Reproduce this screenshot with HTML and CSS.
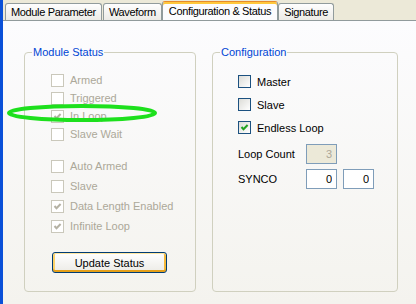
FILE: index.html
```html
<!DOCTYPE html>
<html lang="en">
<head>
  <meta charset="UTF-8">
  <title>Configuration &amp; Status</title>
  <link rel="stylesheet" href="styles.css">
</head>
<body>
  <div class="window">
    <div class="frame-edge"></div>
    <div class="dialog">
      <div class="tabs">
        <div class="tab">Module Parameter</div>
        <div class="tab">Waveform</div>
        <div class="tab active">Configuration &amp; Status</div>
        <div class="tab">Signature</div>
      </div>
      <div class="panel">
        <fieldset class="group status">
          <legend>Module Status</legend>
          <div class="group-body">
            <div class="check-list">
              <label class="check disabled"><span class="box"></span>Armed</label>
              <label class="check disabled"><span class="box"></span>Triggered</label>
              <label class="check disabled checked"><span class="box"><svg viewBox="0 0 11 11"><path d="M2.5 5 L4.5 7.2 L8.6 3"/></svg></span>In Loop</label>
              <label class="check disabled"><span class="box"></span>Slave Wait</label>
            </div>
            <div class="check-list loose">
              <label class="check disabled"><span class="box"></span>Auto Armed</label>
              <label class="check disabled"><span class="box"></span>Slave</label>
              <label class="check disabled checked"><span class="box"><svg viewBox="0 0 11 11"><path d="M2.5 5 L4.5 7.2 L8.6 3"/></svg></span>Data Length Enabled</label>
              <label class="check disabled checked"><span class="box"><svg viewBox="0 0 11 11"><path d="M2.5 5 L4.5 7.2 L8.6 3"/></svg></span>Infinite Loop</label>
            </div>
            <button class="btn">Update Status</button>
          </div>
        </fieldset>

        <fieldset class="group config">
          <legend>Configuration</legend>
          <div class="group-body">
            <div class="check-list wide">
              <label class="check"><span class="box"></span>Master</label>
              <label class="check"><span class="box"></span>Slave</label>
              <label class="check checked"><span class="box"><svg viewBox="0 0 11 11"><path d="M2.5 5 L4.5 7.2 L8.6 3"/></svg></span>Endless Loop</label>
            </div>
            <div class="field-row">
              <span class="field-label">Loop Count</span>
              <input class="text-box" type="text" value="3" disabled>
            </div>
            <div class="field-row">
              <span class="field-label">SYNCO</span>
              <input class="text-box" type="text" value="0">
              <input class="text-box" type="text" value="0">
            </div>
          </div>
        </fieldset>

        <svg class="highlight" width="160" height="24" viewBox="0 0 160 24">
          <ellipse cx="78" cy="11" rx="73" ry="7"/>
        </svg>
      </div>
    </div>
  </div>
</body>
</html>
```

FILE: styles.css
```css
body { margin: 0; padding: 0; font-family: 'Liberation Sans', Arial, sans-serif; font-size: 11px; color: #000; }
.window { display: flex; width: 416px; height: 304px; overflow: hidden; }
.frame-edge { width: 3px; background: #0a50d8; flex: none; }
.dialog { flex: 1; display: flex; flex-direction: column; background: #ece9d8; }

.tabs { display: flex; align-items: flex-end; height: 20px; padding-left: 2px; }
.tab { height: 16px; line-height: 16px; padding: 0 5px; margin-right: 1px; border: 1px solid #919b9c; border-bottom: none; border-radius: 3px 3px 0 0; background: linear-gradient(#fefefe, #ecebe6); white-space: nowrap; letter-spacing: -0.35px; }
.tab.active { position: relative; height: 19px; line-height: 19px; margin: 0 0 -1px -1px; padding: 0 6px; border-top: 1px solid #e68b2c; background: #fcfcfe; box-shadow: inset 0 2px #ffc83c; }

.panel { position: relative; flex: 1; display: flex; gap: 16px; padding: 25px 0 0 21px; border-top: 1px solid #919b9c; background: linear-gradient(#fcfcfe, #f4f3ee); }

.group { box-sizing: border-box; height: 246px; margin: 0; padding: 0 7px; border: 1px solid #d0d0bf; border-radius: 4px; min-width: 0; }
.group legend { padding: 0 1px; line-height: 13px; color: #0046d5; }
.status { width: 172px; }
.config { width: 186px; }
.group-body { padding: 12px 0 0 19px; }
.config .group-body { padding: 11px 0 0 18px; }

.check-list { display: flex; flex-direction: column; }
.check-list.loose { margin-top: 13px; }
.check { display: flex; align-items: center; gap: 6px; height: 18px; }
.loose .check { height: 20px; }
.wide .check { height: 23px; }
.box { box-sizing: border-box; width: 13px; height: 13px; border: 1px solid #1c5180; background: linear-gradient(135deg, #dcdcd7, #fff); flex: none; }
.box svg { display: block; width: 11px; height: 11px; fill: none; stroke: #21a121; stroke-width: 2; }
.check.disabled { color: #aca899; }
.check.disabled .box { border-color: #cac8bb; background: #fff; }
.check.disabled .box svg { stroke: #b5b2a4; }

.btn { display: block; box-sizing: border-box; width: 115px; height: 21px; margin: 16px 0 0 1px; padding: 0; border: 1px solid #003c74; border-radius: 3px; background: linear-gradient(#fff, #ecebe6); box-shadow: inset 0 1px #ffe7a2, inset 0 -2px #e5a01a, inset 2px 0 #fbd26a, inset -2px 0 #f5b93c; font: inherit; color: #000; }

.field-row { display: flex; align-items: center; gap: 6px; height: 20px; margin-top: 5px; }
.field-row:first-of-type { margin-top: 4px; }
.field-label { width: 62px; }
.text-box { box-sizing: border-box; width: 31px; height: 20px; margin: 0; padding: 0 4px 0 0; border: 1px solid #7f9db9; background: #fff; font: inherit; color: #000; text-align: right; }
.text-box:disabled { background: #ece9d8; color: #aca899; }

.highlight { position: absolute; left: 1px; top: 81px; }
.highlight ellipse { fill: none; stroke: #1de01d; stroke-width: 4; }
```
